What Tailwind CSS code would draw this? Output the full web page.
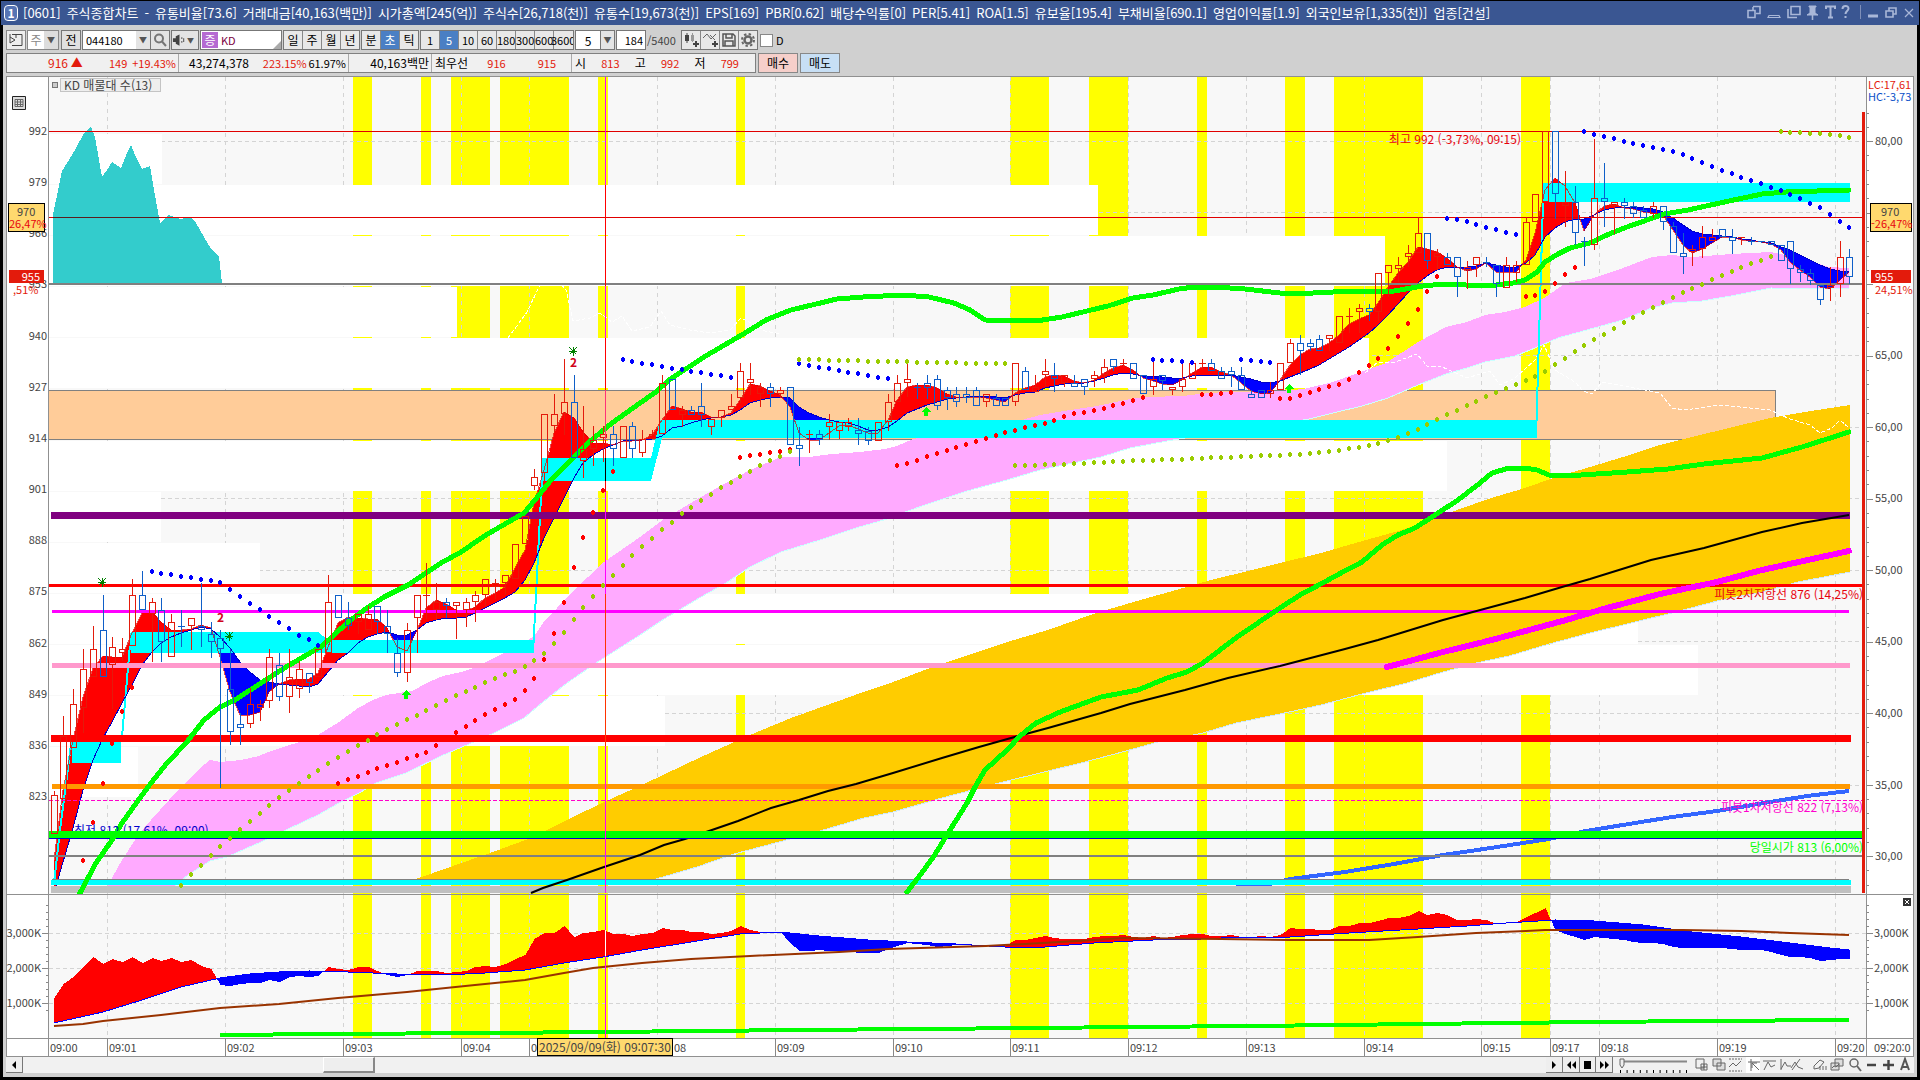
<!DOCTYPE html>
<html lang="ko">
<head>
<meta charset="utf-8">
<title>[0601] 주식종합차트</title>
<script src="https://cdn.jsdelivr.net/npm/@tailwindcss/browser@4"></script>
</head>
<body class="flex min-h-screen flex-col bg-black pt-px pb-[3px] font-['Noto_Sans_CJK_KR',sans-serif] text-xs leading-none text-black">

<header class="mx-px flex h-6 shrink-0 items-center overflow-hidden bg-[#3a5692] pl-[3px] pr-1 text-white">
  <span class="mr-[5px] flex h-4 w-3.5 items-center justify-center rounded-sm border border-white bg-[#5674b4] font-bold">1</span>
  <h1 id="title" class="flex gap-[6px] text-[13px] leading-4 whitespace-nowrap font-normal">
    <span>[0601]</span><span>주식종합차트</span><span>-</span><span>유통비율[73.6]</span><span>거래대금[40,163(백만)]</span><span>시가총액[245(억)]</span><span>주식수[26,718(천)]</span><span>유통수[19,673(천)]</span><span>EPS[169]</span><span>PBR[0.62]</span><span>배당수익률[0]</span><span>PER[5.41]</span><span>ROA[1.5]</span><span>유보율[195.4]</span><span>부채비율[690.1]</span><span>영업이익률[1.9]</span><span>외국인보유[1,335(천)]</span><span>업종[건설]</span>
  </h1>
  <svg class="ml-auto h-6 w-[170px] shrink-0" viewBox="1745 1 170 24" fill="none" stroke="#a9b7d8" stroke-width="1.6" aria-hidden="true">
    <path d="M1753 6.500h7v7h-4M1748 10.500h7v7h-7zM1753 10V7"/><path d="M1769 15.500h10l1 2h-12z" stroke-width="1.200"/>
    <path d="M1791 6.500h9v8h-9zM1788 9v8.500h9"/>
    <path d="M1809 6h7v1h-1v6l3 2h-11l3-2V7h-1z" fill="#a9b7d8" stroke-width="1"/><path d="M1812.500 15v5"/>
    <path d="M1826 9V6.500h9V9M1830.500 6.500v11M1828 17.500h5" stroke-width="2"/>
    <path d="M1842.500 9c0-4 6-4 6-.500 0 2.500-3 2.500-3 5.500M1845.500 16v2" stroke-width="2"/>
    <path d="M1860.500 5v14" stroke="#7f8fb8" stroke-width="1"/><path d="M1868 16h10" stroke-width="3"/>
    <path d="M1889 11V8h7v6h-3M1886 11h7v6h-7z"/><path d="M1905 9l8 8M1913 9l-8 8" stroke-width="1.200"/>
  </svg>
</header>

<main class="ml-[3px] mr-[3px] flex flex-1 flex-col bg-[#d0d0d0] px-[3px] pt-[5px] pb-1">
  <div class="flex h-5 shrink-0 items-stretch gap-px whitespace-nowrap">
    <button class="flex w-5 items-center justify-center border border-[#888] bg-[#eee]" aria-label="화면"><svg class="h-4 w-4" viewBox="0 0 16 16" fill="none" stroke="#444"><path d="M4 2.500h10v11H4M2 5v6l5-3z" /><path d="M8 2v4M2 2v3" /></svg></button>
    <label class="flex w-8 items-center border border-[#888] bg-white"><span class="flex-1 text-center text-[#888]">주</span><button class="h-full w-3.5 bg-[#ddd] text-[8px] text-[#555]" aria-label="선택">▼</button></label>
    <button class="ml-px w-5 border border-[#777] bg-[#e0e0e0]">전</button>
    <input aria-label="종목코드" value="044180" class="w-[54px] border border-r-0 border-[#777] bg-white px-[3px] text-[11px]">
    <button class="-ml-px w-3.5 border-y border-[#777] bg-[#e4e4e4] text-[8px] text-[#555]" aria-label="목록">▼</button>
    <button class="-ml-px flex w-5 items-center justify-center border border-[#777] bg-[#e4e4e4]" aria-label="검색"><svg class="h-3.5 w-3.5" viewBox="0 0 14 14" fill="none" stroke="#777" stroke-width="2"><circle cx="6" cy="5.500" r="4"/><path d="M9 8.500l4 4.500"/></svg></button>
    <button class="flex w-[28px] items-center justify-between border border-[#777] bg-[#e4e4e4] pr-1 text-[7px] text-[#555]" aria-label="소리"><svg class="h-4 w-4" viewBox="0 0 16 16" fill="#444"><path d="M1 6h3V4l4-2v12l-4-2v-2H1z"/><path d="M10 5h1v2h-1zM10 9h1v2h-1zM12 6h1v4h-1z"/></svg>▼</button>
    <label class="relative flex w-[82px] items-center border border-[#777] bg-white pl-px text-[11px] text-[#7b0040]"><span class="mr-[3px] flex h-4 w-4 items-center justify-center bg-[#b56ad2] text-xs text-white">증</span>KD<i class="absolute right-0 bottom-0 border-4 border-transparent border-r-[#aaa] border-b-[#aaa]"></i></label>
    <div class="flex w-[77px] divide-x divide-[#888] border border-[#777] bg-[#e8e8e8]"><button class="flex-1">일</button><button class="flex-1">주</button><button class="flex-1">월</button><button class="flex-1">년</button></div>
    <div class="flex w-[58px] divide-x divide-[#888] border border-[#777] bg-[#e8e8e8]"><button class="flex-1">분</button><button class="flex-1 bg-[#4a7fc4] text-white">초</button><button class="flex-1">틱</button></div>
    <div class="grid w-[154px] grid-cols-8 divide-x divide-[#888] overflow-hidden border border-[#777] bg-[#e8e8e8] text-[11px]"><button>1</button><button class="bg-[#4a7fc4] text-white">5</button><button>10</button><button>60</button><button>180</button><button>300</button><button>600</button><button class="-ml-[3px]">3600</button></div>
    <div class="flex w-10"><input aria-label="간격" value="5" class="w-[26px] border border-[#777] bg-white text-center"><button class="w-3.5 border border-l-0 border-[#777] bg-[#e4e4e4] text-[8px] text-[#555]" aria-label="목록">▼</button></div>
    <label class="flex items-center text-[11px]"><input value="184" aria-label="봉 수" class="h-5 w-[30px] border border-[#777] bg-white pr-0.5 text-right"><span class="w-[34px] pl-px text-[#444]">/5400</span></label>
    <div class="flex w-[77px] divide-x divide-[#888] border border-[#777] bg-[#e8e8e8]">
      <button class="flex flex-1 items-center justify-center" aria-label="지표 추가"><svg class="h-4 w-4" viewBox="0 0 16 16" fill="#444"><path d="M2 3h4v6H2zM3.500 1h1v10h-1z"/><path d="M8 3h3v6H8zM9 1h1v9H9z" fill="#999"/><path d="M12 9h2v2h2v2h-2v2h-2v-2h-2v-2h2z"/></svg></button>
      <button class="flex flex-1 items-center justify-center" aria-label="선 추가"><svg class="h-4 w-4" viewBox="0 0 16 16" fill="none" stroke="#666"><path d="M1 6l4-4 4 5 5-5M8 3l5 5"/><path d="M12 9h2v2h2v2h-2v2h-2v-2h-2v-2h2z" fill="#444" stroke="none"/></svg></button>
      <button class="flex flex-1 items-center justify-center" aria-label="저장"><svg class="h-4 w-4" viewBox="0 0 16 16" fill="none" stroke="#555" stroke-width="1.500"><path d="M2 2h10l2 2v10H2zM5 2v4h6V2M4 14V9h8v5"/></svg></button>
      <button class="flex flex-1 items-center justify-center" aria-label="설정"><svg class="h-4 w-4" viewBox="0 0 16 16" fill="none" stroke="#666"><circle cx="8" cy="8" r="3.500" stroke-width="2.500"/><circle cx="8" cy="8" r="6" stroke-width="2" stroke-dasharray="2.400 2.300"/></svg></button>
    </div>
    <label class="ml-px flex items-center gap-[3px] text-[11px]"><input type="checkbox" class="h-[13px] w-[13px] appearance-none border border-[#888] bg-white">D</label>
  </div>

  <div class="mt-[3px] flex h-5 shrink-0 gap-0.5 whitespace-nowrap">
    <dl class="flex w-[750px] items-stretch divide-x divide-[#aaa] border border-[#808080] bg-[#f0f0f0] text-[#e31b0c] *:flex *:items-center">
      <dd class="w-[172px] justify-end gap-[5px] pr-0.5 text-[11px]"><span class="mr-auto pl-[41px] text-xs">916 ▲</span><span>149</span><span>+19.43%</span></dd>
      <dd class="w-[170px] justify-between pl-2.5 pr-0.5 text-[11px]"><span class="text-xs text-black">43,274,378</span><span class="pl-3">223.15%</span><span class="text-black">61.97%</span></dd>
      <dd class="w-[83px] justify-end pr-0.5 text-black">40,163백만</dd>
      <dd class="w-[140px] pl-[3px] text-[11px]"><span class="text-xs text-black">최우선</span><span class="ml-auto pr-8">916</span><span class="pr-[15px]">915</span></dd>
      <dd class="flex-1 justify-between pl-[3px] pr-4 text-[11px]"><span class="text-xs text-black">시</span><span>813</span><span class="text-xs text-black">고</span><span>992</span><span class="text-xs text-black">저</span><span>799</span></dd>
    </dl>
    <button class="w-10 border border-[#888] bg-[#f6cfca]">매수</button>
    <button class="w-10 border border-[#888] bg-[#c7dff5]">매도</button>
  </div>

  <section class="mt-[3px] grid flex-1 grid-cols-[43px_1fr_48px] grid-rows-[1fr_144px_18px] border-t border-[#909090] bg-white text-[11px] text-[#444]">
    <div id="axisL" class="relative overflow-hidden border-x border-b border-[#909090]">
      <svg class="absolute top-[19px] left-[5px] h-3.5 w-3.5" viewBox="0 0 14 14" fill="#ddd" stroke="#222"><path d="M.500.500h13v13H.500z"/><path d="M3 3.500h8v7H3zM3 6h8M3 8.500h8M5.500 3v8M8.500 3v8" stroke="#666"/></svg>
    </div>
    <div id="plot" class="relative overflow-hidden border-b border-[#909090] bg-[#f8f8f8] text-xs leading-none">
      <svg id="main" class="absolute inset-0 h-full w-full" viewBox="49 77 1817 817" preserveAspectRatio="none" shape-rendering="crispEdges"></svg>
      <div class="absolute top-px left-[3px] flex items-center gap-0.5"><i class="h-1.5 w-1.5 border border-[#777] bg-[#ccc]"></i><span class="h-3.5 w-[101px] border border-[#c4c4c4] bg-[#eee] pl-[3px] leading-3 whitespace-nowrap">KD 매물대 수(13)</span></div>
    </div>
    <div id="axisR" class="relative overflow-hidden border-x border-b border-[#909090]">
      <div class="absolute top-px left-px leading-3 whitespace-nowrap"><p class="text-[#e31b0c]">LC:17,61</p><p class="text-[#0a50c8]">HC:-3,73</p></div>
    </div>
    <div id="subL" class="relative overflow-hidden border-x border-b border-[#909090]"></div>
    <div class="relative overflow-hidden border-b border-[#909090] bg-[#f8f8f8]">
      <svg id="sub" class="absolute inset-0 h-full w-full" viewBox="49 895 1817 143" preserveAspectRatio="none" shape-rendering="crispEdges"></svg>
    </div>
    <div id="subR" class="relative overflow-hidden border-x border-b border-[#909090]">
      <button class="absolute top-[3px] right-0.5 h-2 w-2 bg-[#333]" aria-label="닫기"><svg class="h-2 w-2" viewBox="0 0 8 8" stroke="#fff"><path d="M2 2l4 4M6 2l-4 4"/></svg></button>
    </div>
    <div class="border-x border-b border-[#909090]"></div>
    <div id="times" class="relative border-b border-[#909090]">
      <div class="absolute -top-px left-[488px] z-10 h-[18px] w-[136px] border border-black bg-[#ffd96e] text-center text-xs leading-4 whitespace-nowrap">2025/09/09(화) 09:07:30</div>
    </div>
    <div class="overflow-hidden border-x border-b border-[#909090] pl-[7px] leading-4 whitespace-nowrap">09:20:0</div>
  </section>

  <footer class="flex h-4 shrink-0 items-stretch bg-[#f1f1f1]">
    <button class="w-[17px] border-r border-b border-[#777] bg-[#eee]" aria-label="왼쪽"><svg class="mx-auto h-3 w-3" viewBox="0 0 12 12"><path d="M8 2v8L4 6z"/></svg></button>
    <div class="flex-1 pl-[300px]"><div class="h-4 w-[52px] border-r-2 border-b-2 border-t border-l border-t-white border-l-white border-r-[#888] border-b-[#888] bg-[#eee]"></div></div>
    <div class="flex w-[67px] *:flex-1 *:border-r *:border-b *:border-[#777] *:bg-[#eee]">
      <button aria-label="재생"><svg class="mx-auto h-3 w-3" viewBox="0 0 12 12"><path d="M4 2l4 4-4 4z"/></svg></button>
      <button aria-label="뒤로"><svg class="mx-auto h-3 w-3" viewBox="0 0 12 12"><path d="M6 2v8L2 6zM11 2v8L7 6z"/></svg></button>
      <button aria-label="정지"><svg class="mx-auto h-3 w-3" viewBox="0 0 12 12"><path d="M3 2h7v8H3z"/></svg></button>
      <button aria-label="앞으로"><svg class="mx-auto h-3 w-3" viewBox="0 0 12 12"><path d="M2 2l4 4-4 4zM7 2l4 4-4 4z"/></svg></button>
    </div>
    <svg class="h-4 w-[301px]" viewBox="1613 1058 301 16" fill="none" stroke="#666" aria-hidden="true">
      <path d="M1622 1062.500h65" stroke-width="2" stroke="#888"/><path d="M1620 1060h4v6l-2 3-2-3z" fill="#eee"/>
      <path d="M1620 1072.500h67" stroke="#000" stroke-width="3" stroke-dasharray="1 5.600"/>
      <path d="M1696 1060h8v9h-8zM1701 1065h6v6h-6zM1704 1065v6M1701 1068h6"/>
      <path d="M1713 1060h8v7h-8zM1717 1064h8v7h-8z" fill="#ddd"/>
      <path d="M1729 1060h13M1729 1072h13" stroke-dasharray="2 1"/><path d="M1729 1068l4-4 3 3 5-5"/>
      <path d="M1746 1057h14v17h-14z" fill="#fff" stroke="none"/><path d="M1748 1063h12M1751 1060v12M1752 1064l7 7M1752 1069v-5h5"/>
      <path d="M1763 1062h13M1764 1071l4-8 3 5 4-2M1781 1060v11M1781 1070l4-7 2 4h4M1792 1071l8-11M1791 1069l4-6 3 5 5 2"/>
      <path d="M1814 1067l6-6 4 2-5 6-5 1zM1820 1067v4M1823 1067v4M1826 1067v4"/>
      <path d="M1835 1060h8v7h-8zM1831 1064h8v7h-8zM1832 1069l2-2 2 1 3-3" fill="#ddd"/>
      <circle cx="1854" cy="1064" r="4" stroke-width="1.500"/><path d="M1857 1067l4 5" stroke-width="2"/>
      <path d="M1867 1066h9M1883 1066h11M1888.500 1061v10" stroke-width="2.400" stroke="#444"/>
      <path d="M1901 1071l4-11 4 11M1902 1068h6" stroke-width="2" stroke="#555"/>
    </svg>
  </footer>
</main>

<script>
const X0 = 53.5, STEP = 9.8135, bx = i => Math.round(X0 + STEP * i);
const at = (pts, x) => { for (let k = 1; k < pts.length; k++) if (x <= pts[k][0]) { const [a, b] = pts[k-1], [c, d] = pts[k]; return b + (d - b) * (x - a) / (c - a); } return pts[pts.length-1][1]; };
const rect = (x, y, w, h, f) => `<rect x="${x}" y="${y}" width="${w}" height="${h}" fill="${f}"/>`;
const line = (p, c, w, extra = '') => `<polyline points="${p}" fill="none" stroke="${c}" stroke-width="${w}" ${extra}/>`;
const poly = (p, c) => `<polygon points="${p}" fill="${c}"/>`;
const RED = '#e31b0c', BLUE = '#0f5fc8';

const yellow = [[353,19],[421,10],[451,39],[500,69],[598,10],[736,9],[1010,39],[1089,39],[1197,10],[1285,20],[1334,89],[1521,29]];
const minutes = [107,225,343,461,529,657,775,893,1010,1128,1246,1364,1481,1550,1599,1717,1835];

// area between a fast and a slow average: red while the fast one leads, blue while it trails
function cloud(fast, slow) {
  let r = '', b = '';
  for (let x = 54; x < 1850; x++) {
    const f = Math.round(at(fast, x)), s = Math.round(at(slow, x));
    if (f < s) r += `M${x} ${f}h1V${s}h-1z`; else if (f > s) b += `M${x} ${s}h1V${f}h-1z`;
  }
  return `<path d="${r}" fill="#f00"/><path d="${b}" fill="#00f"/>`;
}
const bars = a => a.map((y, i) => [bx(i), y]);
const idx = a => a.map(([i, y]) => [bx(i), y]);

const fast = bars([860,790,740,697,668,656,657,657,633,613,612,622,630,630,629,625,628,657,692,715,715,712,692,684,680,679,679,673,647,623,617,618,619,619,628,647,651,630,608,600,604,610,611,607,598,593,587,568,550,503,470,433,412,418,432,443,443,445,441,441,440,435,420,406,409,412,412,417,417,413,400,384,386,391,395,407,433,440,440,433,426,425,429,433,433,420,400,387,385,385,388,394,397,397,397,398,400,402,393,388,385,377,375,376,381,383,380,373,368,365,370,378,381,384,385,380,373,367,367,372,375,383,391,394,393,380,365,355,349,348,343,335,324,319,315,303,287,273,262,247,249,252,258,267,271,269,263,272,272,272,260,233,190,178,186,203,231,215,206,204,208,209,212,213,215,230,245,253,249,243,237,237,240,241,242,244,250,262,270,277,287,289,280,272]);
const slow = bars([893,862,828,790,760,738,722,703,685,665,652,643,637,633,630,627,629,637,648,662,672,680,682,684,685,686,687,684,672,660,653,643,637,634,632,635,635,630,623,620,618,618,617,613,608,603,598,592,580,563,538,518,498,478,463,455,449,445,441,440,440,439,436,428,426,423,420,418,417,415,410,403,400,398,397,398,407,413,417,420,422,423,426,430,430,427,421,413,409,405,402,399,398,397,396,396,397,398,395,393,392,388,386,384,383,383,381,378,375,373,374,376,376,377,378,378,376,375,375,375,375,377,379,382,383,381,377,373,369,365,359,353,347,340,333,325,315,304,293,283,276,270,267,267,267,266,263,265,267,267,263,255,237,228,222,219,219,215,210,208,207,207,208,209,212,218,225,231,234,235,236,237,239,240,242,243,247,250,255,260,265,269,271,272]);

// high, body top, body bottom, low, direction (1 up, 0 down)
const candles = [[791,795,834,834,1],[716,736,799,799,1],[689,704,748,748,1],[649,669,708,733,1],[626,649,677,677,1],[595,630,677,677,0],[637,647,665,709,1],[638,649,653,661,1],[579,595,646,646,1],[571,595,610,610,0],[598,602,614,662,1],[598,610,642,662,0],[614,622,657,657,1],[610,626,626,647,0],[618,618,626,650,1],[583,626,630,647,0],[622,634,642,658,0],[630,638,649,788,0],[649,689,732,745,0],[713,724,728,745,0],[688,704,724,728,1],[700,704,708,721,1],[649,657,701,708,1],[653,665,697,701,0],[649,677,697,713,1],[661,669,689,698,1],[673,673,683,693,0],[649,649,677,677,1],[575,602,653,653,1],[595,595,618,618,0],[602,618,626,630,0],[614,614,622,634,1],[606,614,630,630,1],[606,606,622,634,0],[610,626,634,653,0],[638,653,673,677,0],[623,630,673,682,1],[595,595,618,653,1],[563,595,595,619,1],[583,602,610,620,1],[598,602,606,618,0],[602,602,606,639,1],[598,602,610,627,1],[591,595,602,622,1],[579,579,595,607,1],[579,583,587,599,1],[575,575,583,595,1],[544,544,579,579,1],[516,516,544,544,1],[469,477,486,490,1],[414,414,473,482,1],[394,414,426,433,1],[359,402,414,435,1],[375,402,458,458,0],[406,449,461,478,1],[426,440,449,466,1],[426,434,438,462,1],[426,434,449,466,0],[426,426,458,458,1],[422,426,449,458,0],[430,439,453,457,1],[430,434,439,439,1],[375,383,434,434,1],[379,379,410,410,0],[406,410,415,427,1],[406,410,415,415,0],[383,406,415,427,0],[419,419,427,435,1],[410,410,418,427,1],[394,406,410,410,1],[363,371,398,403,1],[363,379,383,395,1],[383,387,394,407,1],[383,387,394,407,0],[387,390,394,398,1],[387,387,445,445,0],[427,445,449,466,0],[430,434,434,453,1],[430,434,440,445,0],[414,422,427,440,1],[422,422,431,439,1],[418,422,427,431,1],[418,430,434,445,0],[427,431,441,445,0],[422,422,441,441,1],[394,402,422,431,1],[375,383,402,402,1],[363,379,383,397,1],[383,387,387,399,0],[375,383,388,399,0],[375,379,406,410,0],[387,390,398,410,0],[387,394,402,407,0],[387,394,398,403,0],[387,390,406,406,0],[394,394,402,407,1],[394,398,406,406,0],[398,398,406,406,0],[363,363,402,406,1],[367,371,390,390,0],[375,387,392,392,1],[359,371,375,387,1],[363,375,379,392,0],[375,375,383,387,1],[375,383,387,387,0],[379,379,387,395,0],[371,375,379,387,1],[359,367,375,383,1],[359,359,367,371,0],[359,363,363,367,1],[363,363,379,379,0],[375,375,394,394,0],[359,379,387,395,1],[375,375,381,390,0],[387,387,390,395,1],[363,379,387,392,1],[363,363,379,379,1],[359,363,363,370,1],[359,363,371,371,0],[367,371,379,379,0],[367,371,375,387,0],[367,375,390,390,0],[390,394,398,398,0],[390,390,398,398,0],[382,390,394,398,1],[363,363,390,390,1],[339,343,363,363,1],[335,343,351,375,0],[339,343,347,351,0],[335,339,351,351,0],[335,335,339,351,1],[316,316,343,343,1],[308,316,316,333,1],[304,308,312,333,1],[304,308,312,321,0],[273,273,312,321,1],[265,265,273,297,1],[257,265,269,282,1],[245,253,257,267,1],[217,233,253,253,1],[233,233,261,269,0],[249,253,257,270,1],[253,257,265,265,0],[257,257,277,297,0],[261,267,269,289,1],[257,257,265,277,1],[257,262,262,267,0],[265,265,284,297,0],[257,265,288,288,1],[261,265,273,282,1],[217,222,265,265,1],[194,194,222,222,1],[131,131,202,202,1],[131,131,194,219,0],[171,202,206,227,1],[186,202,233,245,0],[237,241,241,266,0],[139,198,245,250,1],[163,198,202,227,0],[202,202,206,234,1],[198,202,206,219,0],[202,206,214,218,0],[206,210,218,218,0],[202,206,214,218,1],[206,206,222,230,0],[222,226,253,253,0],[233,253,257,274,0],[245,249,252,266,1],[226,237,249,258,1],[229,237,241,241,1],[229,229,237,237,0],[229,237,241,254,0],[237,237,237,245,1],[237,241,241,245,0],[241,241,241,243,0],[241,241,245,245,0],[245,245,261,261,0],[241,241,269,284,0],[265,269,273,282,0],[269,273,281,285,0],[285,285,300,305,0],[267,285,288,301,1],[241,257,284,297,1],[249,257,277,284,0]];

// trailing-stop dots: colour, first bar, levels
const dots = [
 ['#00f',10,[571,573,574,576,577,579,580,582,589,596,603,609,616,622,628,635,639,645]],
 ['#00f',58,[359,361,363,364,366,368,369,371,372,374,375,377]],['#00f',76,[363,365,367,368,370,372,373,375,377,378]],
 ['#00f',112,[359,360,360,361,362]],['#00f',121,[359,360,361,362]],['#00f',142,[218,219,221,224,227,229,232,234]],
 ['#00f',156,[131,134,136,138,141,143,145,147,149,151,154,158,162,166,170,173,177,180,183,187,190,194,198,203,207,214,221,227]],
 ['#f00',3,[860,822,783,743,711,687]],['#f00',29,[783,779,776,772,768,765,762,758,755,752,745,739,732,726,720,714,709,704,699,690,678,659,633,602,567,537,512,490,471]],
 ['#f00',70,[457,455,454,452,451,449]],['#f00',86,[465,463,460,456,453,450,447,444,441,438,435,432,430,427,425,423,420,416,413,412,410,408,405,403,400,397]],
 ['#f00',117,[394,394,393,392]],['#f00',125,[398,398,395,392,389,386,384,379,372,365,358,348,336,323,309,291,276]],['#f00',150,[296,295,291,283,274,267]],
 ['#9c0',13,[885,874,865,855,846,838,829,821,813,805,797,790,783,776,770,763,757,751,745,740,734,729,724,719,715,710,705,700,695,691,687,682,678,674,671,666,660,653,643,632,619,607,596,585,575,565,555,546,538,529,522,513,507,500,494,487,482,476,471,465,460,456,451]],
 ['#9c0',76,[359,359,359,360,360,360,360,361,361,361,361,361,362,362,362,362,362,363,363,363,363,363]],
 ['#9c0',98,[465,465,465,464,464,464,463,463,462,462,461,461,460,460,460,459,459,459,458,458,457,457,457,456,456,455,455,455]],
 ['#9c0',126,[454,454,453,452,451,450,448,447,445,443,440,437,433,429,424,419,414,410,405,401,396,392,388,384,380,376,371,364,358,351,345,339,334,328,322,317,312,307,302,297,292,288,284,279,275,271,267,263,260,256]],
 ['#9c0',176,[131,132,132,133,133,134,135,137]]];

const pinkTop = '104,892 122,860 137,837 151,820 169,800 186,782 200,768 210,760 220,762 241,760 259,756 268,752 286,746 300,742 318,735 339,722 358,708 373,700 386,695 412,691 429,682 443,676 461,672 476,667 494,658 506,652 524,643 535,635 543,623 571,593 604,562 640,537 664,519 701,497 726,483 750,470 781,457 809,457 832,454 860,452 885,449 897,446 913,439 934,435 962,428 991,424 1015,422 1040,415 1064,411 1097,406 1130,399 1146,397 1183,396 1199,394 1224,392 1280,391 1304,389 1333,382 1358,373 1386,363 1418,342 1446,327 1467,322 1485,315 1505,312 1525,307 1544,298 1566,283 1590,279 1623,268 1652,257 1672,255 1692,257 1731,254 1771,252 1790,256 1809,261 1829,267 1849,268';
const pinkBottom = '167,893 188,875 210,861 227,857 245,849 261,842 286,830 318,815 339,803 359,793 376,783 406,773 441,756 469,744 494,733 524,718 543,702 567,683 596,663 640,635 664,619 701,597 726,583 750,567 781,552 820,540 856,528 887,519 905,512 934,502 967,491 1007,480 1040,470 1073,463 1101,457 1130,448 1167,441 1191,437 1228,429 1280,424 1309,419 1337,412 1362,406 1388,398 1418,385 1446,374 1467,368 1485,362 1515,356 1535,348 1558,338 1594,328 1623,320 1652,308 1672,303 1702,301 1731,296 1771,288 1849,289';
const goldTop = '416,879 490,853 531,838 547,830 571,818 604,802 644,784 701,757 750,735 791,718 869,690 893,682 930,668 950,661 1007,642 1048,630 1093,614 1130,603 1183,588 1211,580 1252,570 1280,563 1321,553 1366,540 1402,530 1443,515 1488,499 1525,488 1553,478 1590,467 1623,457 1656,446 1692,437 1729,428 1770,418 1811,411 1850,405';
const goldBottom = '656,879 697,867 734,854 779,842 820,831 864,818 893,812 942,798 995,784 1048,771 1081,763 1126,751 1158,742 1203,733 1236,723 1280,714 1321,705 1362,694 1407,683 1443,672 1476,663 1509,656 1549,644 1590,633 1631,623 1676,612 1721,600 1762,592 1798,582 1850,572';
const back = s => s.split(' ').reverse().join(' ');

let s = yellow.map(([x, w]) => rect(x, 77, w, 817, '#ff0')).join('');
s += minutes.map(x => line(`${x}.5,77 ${x}.5,894`, '#d4d4d4', 1, 'stroke-dasharray="4 4"')).join('');
s += [141,212,284,355,427,498,570,641,713,785,856].map(y => line(`49,${y}.5 1862,${y}.5`, '#d4d4d4', 1, 'stroke-dasharray="4 3"')).join('');
s += [[134,162],[185,1098],[236,1385],[287,457],[338,1369],[389,49],[441,1447],[492,161],[543,260],[594,1638],[645,1698],[696,665],[747,138]].map(([y, x]) => rect(49, y, x - 49, 50, '#fff')).join('');
s += rect(49, 390, 1726, 49, '#ffcc99') + line('49,390.5 1775.5,390.5 1775.5,439.5 49,439.5', '#808080', 1);
s += poly('53,215 56,200 62,171 69,160 76,148 84,133 91,127 95,137 99,160 102,177 107,170 112,162 121,168 127,153 131,145 135,155 142,169 150,166 154,190 160,223 169,215 180,219 190,217 196,223 204,237 210,247 219,257 222,283 53,283', '#33cccc');
s += poly(goldTop + ' ' + back(goldBottom), '#ffcc00') + line(goldBottom, '#cfe8f5', 1);
s += poly(pinkTop + ' ' + back(pinkBottom), '#ffaaff') + line(pinkBottom, '#ccffff', 1);
s += line('508,338 527,312 540,285 560,283 566,290 573,321 590,318 600,313 612,322 622,316 632,331 650,327 661,311 670,325 690,330 710,333 730,330 741,318 755,325 765,331 781,334', '#fff', 1, 'stroke-dasharray="4 2"');
s += line('1365,373 1378,362 1395,362 1417,354 1428,367 1440,366 1467,378 1490,371 1500,385 1515,378 1535,360 1544,345 1555,370 1575,382 1583,391 1592,394 1602,382 1650,391 1660,393 1672,408 1685,410 1720,405 1770,410 1790,419 1810,425 1820,433 1832,428 1840,420 1849,428', '#fff', 1, 'stroke-dasharray="4 2"');
s += cloud(fast, slow);
s += rect(72, 737, 49, 26, '#0ff') + poly('131,632 318,632 328,640 533,640 533,653 131,653', '#0ff') + poly('543,458 651,458 660,420 1536,420 1536,438 662,438 651,481 543,481', '#0ff') + rect(1543, 183, 307, 19, '#0ff');
s += line('54,883 60,830 72,737 122,737 131,633', '#0ff', 2) + line('533,653 543,458', '#0ff', 2) + line('1536,438 1543,203', '#0ff', 2);
s += line(slow.join(' '), '#0000c8', 1) + line(fast.join(' '), '#e00000', 1, 'stroke-opacity=".7"');
s += rect(49, 131, 1813, 1, '#e00000') + rect(49, 217, 1813, 1, '#e00000') + rect(53, 217, 107, 1, '#5a1e1e') + rect(49, 283, 1813, 2, '#808080');
s += rect(51, 512, 1799, 7, '#800080') + rect(49, 584, 1813, 3, '#f00') + rect(52, 610, 1797, 3, '#f0f') + rect(52, 663, 1798, 5, '#ff99cc') + rect(51, 735, 1800, 7, '#f00') + rect(52, 784, 1798, 5, '#ff9900');
s += line('49,800.5 1862,800.5', '#ff00cc', 1, 'stroke-dasharray="4 2"');
s += line('1236,886 1266,885 1290,879 1345,872 1394,864 1443,855 1484,849 1549,839 1586,831 1635,823 1672,817 1717,811 1770,802 1807,796 1849,791', '#3366ff', 4);
s += rect(49, 855, 1813, 2, '#808080') + rect(52, 879, 1797, 1, '#808080') + rect(51, 880, 1800, 5, '#0ff') + rect(51, 886, 1800, 7, '#c0c0c0');
s += line('531,893 543,888 567,880 604,867 640,855 664,845 685,839 709,831 738,821 771,808 799,800 828,791 856,784 893,773 942,758 979,747 1011,738 1048,728 1101,713 1130,704 1185,690 1228,678 1280,666 1345,649 1378,640 1443,620 1484,609 1525,598 1562,587 1590,579 1651,560 1704,548 1762,532 1802,523 1849,515', '#000', 2, 'shape-rendering="auto"');
s += rect(49, 831, 1813, 7, '#0f0') + rect(49, 838, 1813, 1, '#00c');
s += line('1387,667 1443,652 1484,642 1533,629 1566,620 1607,608 1660,594 1717,582 1762,570 1849,551', '#f0f', 6, 'stroke-linecap="round"');
s += line('80,893 96,863 112,840 122,823 137,802 151,783 167,763 186,743 204,720 220,707 235,700 261,683 286,667 322,646 347,623 367,608 384,597 408,585 441,563 461,552 486,535 524,513 535,500 551,480 571,460 588,443 612,423 640,403 656,392 669,380 704,357 745,333 766,320 791,310 837,299 863,297 903,295 929,297 954,303 970,310 985,320 1036,321 1062,317 1087,311 1108,306 1133,298 1153,295 1179,289 1194,287 1215,287 1245,289 1280,293 1313,293 1353,291 1394,291 1423,286 1443,284 1488,286 1513,283 1525,280 1537,272 1545,262 1558,254 1570,248 1590,243 1607,235 1627,227 1647,220 1664,214 1688,210 1729,201 1762,194 1786,192 1849,190', '#0f0', 5, 'stroke-linejoin="round" stroke-linecap="round"');
s += line('907,892 918,878 934,856 950,830 967,803 975,787 985,770 1007,750 1020,736 1036,723 1060,712 1101,697 1138,690 1167,678 1187,672 1203,663 1220,650 1240,635 1280,608 1300,595 1317,586 1341,573 1362,562 1382,545 1398,535 1415,528 1435,515 1458,500 1480,483 1492,473 1509,468 1525,468 1537,470 1549,475 1566,476 1627,472 1668,469 1704,464 1762,458 1802,447 1849,432', '#0f0', 5, 'stroke-linejoin="round" stroke-linecap="round"');
candles.forEach(([h, t, b, l, up], i) => {
  const x = bx(i), c = up ? RED : BLUE;
  if (h < t) s += rect(x, h, 1, t - h, c);
  if (l > b) s += rect(x, b, 1, l - b, c);
  s += b > t ? `<rect x="${x - 2.5}" y="${t + .5}" width="6" height="${Math.max(b - t - 1, 2)}" fill="none" stroke="${c}"/>` : rect(x - 3, t, 7, 1, c);
});
dots.forEach(([c, i0, ys]) => ys.forEach((y, k) => { const x = bx(i0 + k); s += rect(x - 2, y - 1, 4, 3, c) + rect(x - 1, y - 2, 2, 5, c); }));
[[406,695],[926,412],[1289,389]].forEach(([x, y]) => s += poly(`${x},${y-5} ${x+5},${y} ${x+2},${y} ${x+2},${y+4} ${x-2},${y+4} ${x-2},${y} ${x-5},${y}`, '#0f0'));
[[102,582],[229,636],[573,351]].forEach(([x, y]) => s += `<path d="M${x-3.5} ${y-3.5}l7 7m0-7l-7 7m3.500-8v9m-4-4.500h8" stroke="#008000" fill="none"/>` + rect(x-1, y-1, 3, 3, '#008000'));
[[77,185,'#f0f'],[185,286,'#f00'],[286,338,'#f0f'],[338,390,'#f00'],[390,440,'#ff3377'],[440,458,'#f00'],[458,481,'#000'],[481,492,'#f00'],[492,594,'#f0f'],[594,746,'#f30'],[746,893,'#f0f']].forEach(([a, b, c]) => s += rect(605, a, 1, b - a, c));
s += rect(1862, 112, 3, 781, RED);
document.getElementById('main').innerHTML = s;

const vFast = bars([998,984,977,967,957,964,959,962,957,963,958,961,958,962,960,966,969,985,986,984,983,983,980,982,977,976,977,976,967,969,970,967,967,971,975,977,975,971,971,971,973,972,971,967,966,967,964,959,955,939,933,933,926,937,933,932,930,934,934,936,934,933,928,930,930,932,932,934,933,931,926,930,932,933,932,943,951,951,950,951,951,951,953,953,953,949,946,943,944,945,947,946,945,945,946,946,945,946,940,940,938,936,938,939,939,939,937,936,936,935,937,938,936,938,937,935,934,934,936,936,935,937,937,936,937,935,928,929,929,930,930,926,926,923,923,921,918,918,916,911,915,913,915,920,920,919,920,924,923,922,917,913,908,930,934,937,940,937,938,939,940,942,943,943,944,947,948,948,948,948,948,949,950,950,950,952,955,957,957,958,961,960,959,959]);
const vSlow = idx([[0,1023],[5,1012],[9,1000],[13,987],[17,978],[20,974],[23,972],[26,971],[30,972],[35,974],[40,975],[44,973],[48,970],[52,963],[56,957],[60,950],[65,942],[70,934],[72,933],[74,932],[78,936],[83,940],[87,942],[92,944],[97,947],[101,947],[106,943],[112,940],[117,939],[121,937],[126,937],[132,933],[139,929],[144,926],[148,923],[153,920],[157,921],[162,925],[167,932],[172,937],[177,943],[181,948],[183,950]]);
let v = yellow.map(([x, w]) => rect(x, 895, w, 143, '#ff0')).join('');
v += minutes.map(x => line(`${x}.5,895 ${x}.5,1038`, '#d4d4d4', 1, 'stroke-dasharray="4 4"')).join('');
v += [933,968,1003].map(y => line(`49,${y}.5 1866,${y}.5`, '#d4d4d4', 1, 'stroke-dasharray="4 3"')).join('');
v += cloud(vFast, vSlow) + line(vSlow.join(' '), '#00f', 1);
v += line(idx([[0,1026],[3,1024],[5,1021],[11,1015],[17,1008],[23,1004],[29,998],[36,992],[43,985],[48,980],[52,973],[55,968],[60,963],[65,959],[71,956],[80,952],[85,949],[95,946],[99,944],[106,940],[109,938],[119,939],[126,940],[134,940],[139,937],[145,933],[150,931],[152,930],[166,930],[172,931],[177,933],[183,935]]).join(' '), '#993300', 2, 'shape-rendering="auto"');
v += line(idx([[17,1035],[28,1034],[44,1033],[56,1032],[66,1031],[76,1030],[100,1028],[110,1027],[122,1026],[131,1025],[139,1024],[157,1022],[168,1021],[183,1020]]).join(' '), '#0f0', 4);
v += rect(605, 895, 1, 143, '#f0f') + rect(605, 930, 1, 26, '#fff');
document.getElementById('sub').innerHTML = v;

// text laid over a pane at a share of its height or width
function put(id, text, cls, css) { const e = document.createElement('span'); e.className = 'absolute whitespace-nowrap ' + cls; e.style.cssText = css; e.textContent = text; document.getElementById(id).append(e); }
const py = y => `top:${(y - 77) / 817 * 100}%;`, sy = y => `top:${(y - 895) / 143 * 100}%;`;
for (let k = 0; k < 14; k++) put('axisL', 992 - 13 * k, 'right-px leading-3', py(124 + 51.15 * k));
[[141,'80,00'],[355,'65,00'],[427,'60,00'],[498,'55,00'],[570,'50,00'],[641,'45,00'],[713,'40,00'],[785,'35,00'],[856,'30,00']].forEach(([y, t]) => put('axisR', t, 'left-2 leading-3', py(y - 7)));
for (let k = 0; k < 55; k++) { const y = 112.5 + 14.3 * k; if (y < 890) put('axisR', '', 'left-0 h-px bg-[#888] ' + ((k - 2) % 5 ? 'w-0.5' : 'w-1.5'), py(y)); }
for (const [id, side] of [['subL', 'right-0'], ['subR', 'left-0']]) {
  for (let k = 0; k < 16; k++) put(id, '', side + ' h-px bg-[#888] ' + ((k + 1) % 5 ? 'w-0.5' : 'w-1.5'), sy(905 + 7 * k));
  [[933,'3,000K'],[968,'2,000K'],[1003,'1,000K']].forEach(([y, t]) => put(id, t, 'leading-3 ' + (side === 'right-0' ? 'right-[7px]' : 'left-[7px]'), sy(y - 7)));
}
const box = 'z-10 h-[29px] border border-black bg-[#ffd96e] ';
put('axisL', '', box + 'left-px w-[37px]', py(203)); put('axisL', '970', 'z-20 left-2.5 leading-3', py(205)); put('axisL', '26,47%', 'z-20 left-0.5 leading-3 text-red-600', py(217));
put('axisR', '', box + 'left-[3px] w-[42px]', py(203)); put('axisR', '970', 'z-20 left-3.5 leading-3', py(205)); put('axisR', '-26,47%', 'z-20 left-1 leading-3 text-red-600', py(217));
put('axisL', '955', 'z-10 left-0.5 h-[13px] w-[35px] bg-[#e31b0c] pr-1 text-right leading-3 text-white', py(270)); put('axisL', ',51%', 'z-10 left-1.5 leading-3 text-[#e31b0c]', py(283));
put('axisR', '955', 'z-10 left-1 h-[13px] w-10 bg-[#e31b0c] pl-1 leading-3 text-white', py(270)); put('axisR', '24,51%', 'z-10 left-2 leading-3 text-[#e31b0c]', py(283));
const right = x => `right:${(1866 - x) / 1817 * 100}%;`, left = x => `left:${(x - 49) / 1817 * 100}%;`;
put('plot', '최고 992 (-3,73%, 09:15)', 'text-red-600', right(1521) + py(133));
put('plot', '피봇2차저항선 876 (14,25%)', 'text-red-600', right(1863) + py(588));
put('plot', '피봇1차저항선 822 (7,13%)', 'text-[#f0c]', right(1863) + py(801));
put('plot', '당일시가 813 (6,00%)', 'text-[#0f0]', right(1863) + py(841));
put('plot', '최저 812 (17,61%, 09:00)', 'h-[7px] overflow-hidden text-[#00c]', left(74) + py(824));
put('plot', '2', 'font-bold text-[#d0021b]', left(570) + py(356)); put('plot', '2', 'font-bold text-[#d0021b]', left(217) + py(611));
[[49,'09:00'],[107,'09:01'],[225,'09:02'],[343,'09:03'],[461,'09:04'],[529,'0'],[673,'08'],[775,'09:09'],[893,'09:10'],[1010,'09:11'],[1128,'09:12'],[1246,'09:13'],[1364,'09:14'],[1481,'09:15'],[1550,'09:17'],[1599,'09:18'],[1717,'09:19'],[1835,'09:20']].forEach(([x, t]) => put('times', t, 'top-0 h-full pl-px leading-4 ' + (x !== 49 && x !== 673 ? 'border-l border-[#888]' : ''), left(x)));
</script>
</body>
</html>
